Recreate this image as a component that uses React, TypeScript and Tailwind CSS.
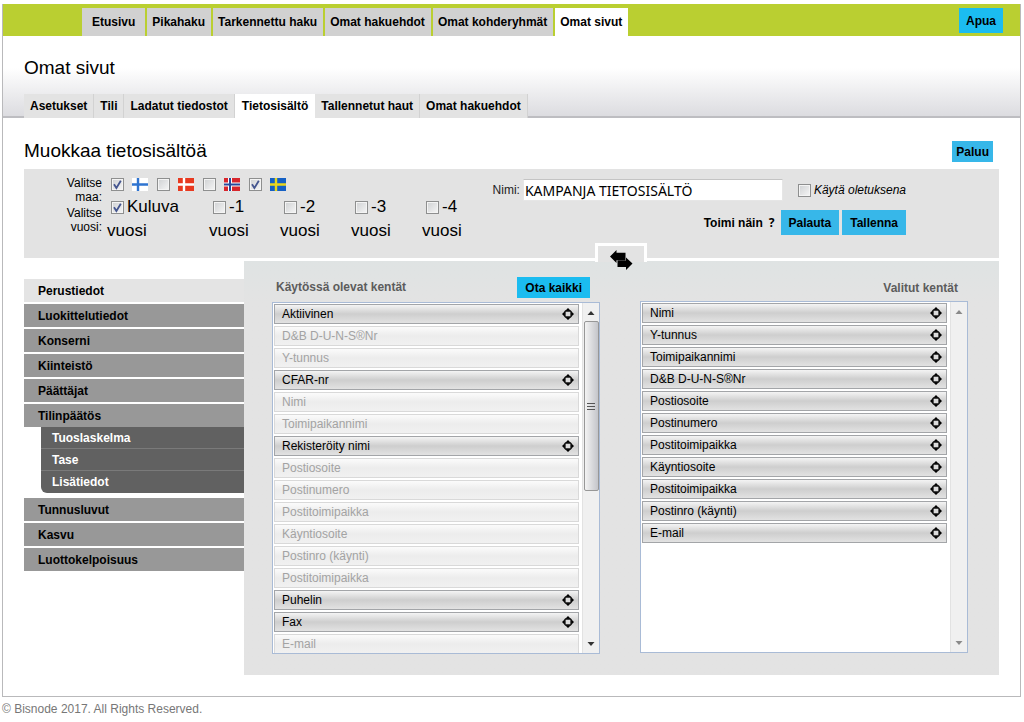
import type { ReactNode } from "react";

const MAIN_TABS = ["Etusivu", "Pikahaku", "Tarkennettu haku", "Omat hakuehdot", "Omat kohderyhmät", "Omat sivut"];
const SUB_TABS = ["Asetukset", "Tili", "Ladatut tiedostot", "Tietosisältö", "Tallennetut haut", "Omat hakuehdot"];
const YEARS = ["Kuluva", "-1", "-2", "-3", "-4"];

type Item = { label: string; used?: boolean };
const AVAILABLE: Item[] = [
  { label: "Aktiivinen" },
  { label: "D&B D-U-N-S®Nr", used: true },
  { label: "Y-tunnus", used: true },
  { label: "CFAR-nr" },
  { label: "Nimi", used: true },
  { label: "Toimipaikannimi", used: true },
  { label: "Rekisteröity nimi" },
  { label: "Postiosoite", used: true },
  { label: "Postinumero", used: true },
  { label: "Postitoimipaikka", used: true },
  { label: "Käyntiosoite", used: true },
  { label: "Postinro (käynti)", used: true },
  { label: "Postitoimipaikka", used: true },
  { label: "Puhelin" },
  { label: "Fax" },
  { label: "E-mail", used: true },
];
const SELECTED: Item[] = [
  "Nimi",
  "Y-tunnus",
  "Toimipaikannimi",
  "D&B D-U-N-S®Nr",
  "Postiosoite",
  "Postinumero",
  "Postitoimipaikka",
  "Käyntiosoite",
  "Postitoimipaikka",
  "Postinro (käynti)",
  "E-mail",
].map((label) => ({ label }));

function Check({ label, checked, id }: { label?: string; checked?: boolean; id?: string }) {
  return (
    <span className="relative inline-flex size-[13px] shrink-0">
      <input
        id={id}
        type="checkbox"
        aria-label={label}
        defaultChecked={checked}
        className="peer size-[13px] appearance-none border border-[#8e8f8f] bg-linear-to-br from-[#cfd1d3] to-[#f6f6f6] shadow-[inset_0_0_0_1px_#f4f4f4]"
      />
      <svg viewBox="0 0 13 13" className="pointer-events-none absolute inset-0 hidden size-[13px] peer-checked:block" aria-hidden="true">
        <path d="M3 6.2 L5.4 10 L9.8 2.8" fill="none" stroke="#44558f" strokeWidth="1.8" />
      </svg>
    </span>
  );
}

function Flag({ bg, cross, inner }: { bg: string; cross: string; inner?: string }) {
  return (
    <svg viewBox="0 0 16 13" className="h-[13px] w-4" aria-hidden="true">
      <rect width="16" height="13" fill={bg} />
      <path d="M6 0V13M0 6.5H16" stroke={cross} strokeWidth={inner ? 4 : 2.4} />
      {inner && <path d="M6 0V13M0 6.5H16" stroke={inner} strokeWidth="2" />}
    </svg>
  );
}

function MoveIcon() {
  return (
    <svg viewBox="0 0 12 12" className="size-3" aria-hidden="true">
      <path d="M6 0L9 3H3ZM6 12L3 9H9ZM0 6L3 3V9ZM12 6L9 9V3Z" fill="#000" />
      <rect x="3" y="3" width="6" height="6" rx="1" fill="#dcdcdc" stroke="#111" strokeWidth="1.3" />
    </svg>
  );
}

function FieldList({ items, active, label }: { items: Item[]; active?: boolean; label: string }) {
  const arrow = active ? "#333" : "#8a8a8a";
  return (
    <div className="flex h-[352px] overflow-hidden border border-[#a9bbd6] bg-white">
      <ul aria-label={label} className="flex flex-1 flex-col gap-0.5 p-px">
        {items.map((item, i) => (
          <li key={i}>
            <button
              type="button"
              disabled={item.used}
              className={
                "flex h-5 w-full items-center justify-between border pr-1 pl-[7px] text-left text-[12px] " +
                (item.used
                  ? "border-[#d9d9d9] bg-linear-to-b from-[#fbfbfb] via-[#ececec] to-[#f1f1f1] text-[#a3a3a3]"
                  : "border-[#a3a5a8] bg-linear-to-b from-[#f4f4f4] via-[#cecece] to-[#e2e2e2] text-black")
              }
            >
              {item.label}
              {!item.used && <MoveIcon />}
            </button>
          </li>
        ))}
      </ul>
      <div className="ml-0.5 flex w-[17px] flex-col items-center border-l border-[#e2e2e2] bg-[#f0f0f0]" aria-hidden="true">
        <svg viewBox="0 0 16 18" className="h-[18px] w-4">
          <path d="M4.5 12L8 8L11.5 12Z" fill={arrow} />
        </svg>
        {active && (
          <div className="flex h-[170px] w-[15px] flex-col items-center justify-center gap-0.5 rounded-xs border border-[#979797] bg-linear-to-r from-[#f3f3f3] to-[#c4c5ca]">
            <i className="h-px w-2 bg-[#555]" />
            <i className="h-px w-2 bg-[#555]" />
            <i className="h-px w-2 bg-[#555]" />
          </div>
        )}
        <svg viewBox="0 0 16 17" className="mt-auto h-[17px] w-4">
          <path d="M4.5 6L8 10L11.5 6Z" fill={arrow} />
        </svg>
      </div>
    </div>
  );
}

function MenuLink({ children, current }: { children: ReactNode; current?: boolean }) {
  return (
    <a href="#" className={"flex h-[23px] items-center pl-3.5 " + (current ? "bg-[#e4e4e4]" : "bg-[#989898]")}>
      {children}
    </a>
  );
}

export default function App() {
  return (
    <div className="bg-white pt-1 font-['Liberation_Sans',Arial,sans-serif] text-[12px] leading-[14px] text-black">
      <div className="mr-[3px] ml-0.5 border-x border-b border-[#b9b9bb]">
        <header className="flex h-8 items-start justify-between bg-[#bacf31] pt-1 pr-[17px] pl-[79px]">
          <nav className="flex gap-0.5 font-bold">
            {MAIN_TABS.map((tab, i) => (
              <a
                key={tab}
                href="#"
                className={
                  "flex h-7 items-center " +
                  (i === 5 ? "bg-white " : "bg-[#d1d1d1] ") +
                  (i === 0 ? "px-2.5" : "pr-1.5 pl-[5px]")
                }
              >
                {tab}
              </a>
            ))}
          </nav>
          <button type="button" className="h-[25px] bg-[#1bbcf0] px-[7px] font-bold">Apua</button>
        </header>

        <div className="flex h-[82px] flex-col justify-between border-b-2 border-[#bdbdc1] bg-linear-to-b from-white from-40% to-[#dcdce0] pl-[21px]">
          <h1 className="pt-[22px] text-[19px] leading-5">Omat sivut</h1>
          <nav className="-mb-0.5 flex font-bold">
            {SUB_TABS.map((tab, i) => (
              <a
                key={tab}
                href="#"
                className={
                  "flex h-6 items-center " +
                  (i === 3 ? "bg-white px-[7px]" : "border-r border-[#d2d2d2] bg-[#e3e3e3] px-1.5")
                }
              >
                {tab}
              </a>
            ))}
          </nav>
        </div>

        <main className="px-[21px] pb-[21px]">
          <div className="flex items-start justify-between pt-[23px] pr-1.5">
            <h2 className="text-[19px] leading-5">Muokkaa tietosisältöä</h2>
            <button type="button" className="h-[21px] bg-[#37b7e9] px-1 font-bold">Paluu</button>
          </div>

          <form className="relative mt-[7px] flex h-[89px] items-start justify-between bg-[#e3e3e3] pr-[93px]" onSubmit={(e) => e.preventDefault()}>
            <div className="flex">
              <div className="flex w-[78px] shrink-0 flex-col gap-0.5 pt-[7px] text-right">
                <span>Valitse<br />maa:</span>
                <span>Valitse<br />vuosi:</span>
              </div>
              <div className="pt-[9px] pl-[5px]">
                <div className="flex gap-2 pl-1">
                  <span className="flex w-[38px] gap-2"><Check label="Suomi" checked /><Flag bg="#fff" cross="#2f74d0" /></span>
                  <span className="flex w-[38px] gap-2"><Check label="Tanska" /><Flag bg="#e8391f" cross="#fff" /></span>
                  <span className="flex w-[38px] gap-2"><Check label="Norja" /><Flag bg="#d8262c" cross="#fff" inner="#2a4a9c" /></span>
                  <span className="flex w-[38px] gap-2"><Check label="Ruotsi" checked /><Flag bg="#1560c4" cross="#e8d51c" /></span>
                </div>
                <div className="flex pt-1 text-[17px] leading-6">
                  {YEARS.map((year, i) => (
                    <label key={year} htmlFor={"year" + i} className={"shrink-0 " + (i === 0 ? "w-[102px]" : i === 4 ? "w-11" : "w-[71px]")}>
                      <span className="flex items-center gap-[3px] pl-1">
                        <Check id={"year" + i} checked={i === 0} />
                        {year}
                      </span>
                      vuosi
                    </label>
                  ))}
                </div>
              </div>
            </div>
            <div className="flex shrink-0 flex-col items-end gap-[9px] pt-2.5">
              <div className="flex items-center whitespace-nowrap">
                <label htmlFor="name" className="pr-[3px] text-[#222]">Nimi:</label>
                <input
                  id="name"
                  defaultValue="KAMPANJA TIETOSISÄLTÖ"
                  className="h-[22px] w-[260px] border border-[#e6e6e6] border-t-[#c4c4c4] bg-white px-px font-['Noto_Sans',sans-serif] text-[14px]"
                />
                <label className="flex items-center gap-[3px] pl-[15px] italic">
                  <Check />
                  Käytä oletuksena
                </label>
              </div>
              <div className="flex items-center font-bold">
                <a href="#">Toimi näin</a>
                <span className="px-1.5 font-['Noto_Sans',sans-serif]">?</span>
                <button type="button" className="mr-[3px] h-[25px] bg-[#37b7e9] px-2">Palauta</button>
                <button type="submit" className="h-[25px] bg-[#37b7e9] px-2">Tallenna</button>
              </div>
            </div>
            <button
              type="button"
              aria-label="Vaihda"
              className="absolute top-[74px] left-[571px] z-10 flex h-[30px] w-[52px] items-center justify-center"
            >
              <span className="absolute inset-x-0 top-0 h-[19px] border-x-3 border-t-3 border-white bg-[#e3e3e3]" />
              <svg viewBox="0 0 24 22" className="relative mt-1 h-[22px] w-6" aria-hidden="true">
                <path d="M1 7.5L7.5 1V3.8H16.5V11.2H7.5V14ZM23.5 14.5L17 21V18H8.5V11.5H17V8.5Z" fill="#000" />
              </svg>
            </button>
          </form>

          <div className="mt-[3px] flex items-start">
            <nav className="z-10 mt-[18px] flex w-[220px] flex-col gap-0.5 font-bold">
              <MenuLink current>Perustiedot</MenuLink>
              <MenuLink>Luokittelutiedot</MenuLink>
              <MenuLink>Konserni</MenuLink>
              <MenuLink>Kiinteistö</MenuLink>
              <MenuLink>Päättäjat</MenuLink>
              <div className="pb-[3px]">
                <MenuLink>Tilinpäätös</MenuLink>
                <div className="ml-[17px] flex flex-col divide-y divide-[#7a7a7a] rounded-bl-md bg-[#616161] text-white">
                  <a href="#" className="flex h-[22px] items-center pl-[11px]">Tuoslaskelma</a>
                  <a href="#" className="flex h-[22px] items-center pl-[11px]">Tase</a>
                  <a href="#" className="flex h-[22px] items-center pl-[11px]">Lisätiedot</a>
                </div>
              </div>
              <MenuLink>Tunnusluvut</MenuLink>
              <MenuLink>Kasvu</MenuLink>
              <MenuLink>Luottokelpoisuus</MenuLink>
            </nav>

            <section className="flex flex-1 gap-10 bg-[#e3e3e3] bg-linear-to-b from-[#dfe3e3] to-[#e3e3e3] to-10% pt-4 pr-[31px] pb-[21px] pl-7">
              <div className="flex-1">
                <div className="flex h-[25px] items-start justify-between pr-2.5 pl-1">
                  <h3 className="pt-[3px] font-bold text-[#5c5c5c]">Käytössä olevat kentät</h3>
                  <button type="button" className="h-[21px] bg-[#1bbcf0] px-2 font-bold">Ota kaikki</button>
                </div>
                <FieldList items={AVAILABLE} active label="Käytössä olevat kentät" />
              </div>
              <div className="flex-1">
                <h3 className="h-6 pt-1 pr-2.5 text-right font-bold text-[#5c5c5c]">Valitut kentät</h3>
                <FieldList items={SELECTED} label="Valitut kentät" />
              </div>
            </section>
          </div>
        </main>
      </div>
      <footer className="pt-[5px] pl-0.5 text-[#777]">© Bisnode 2017. All Rights Reserved.</footer>
    </div>
  );
}
